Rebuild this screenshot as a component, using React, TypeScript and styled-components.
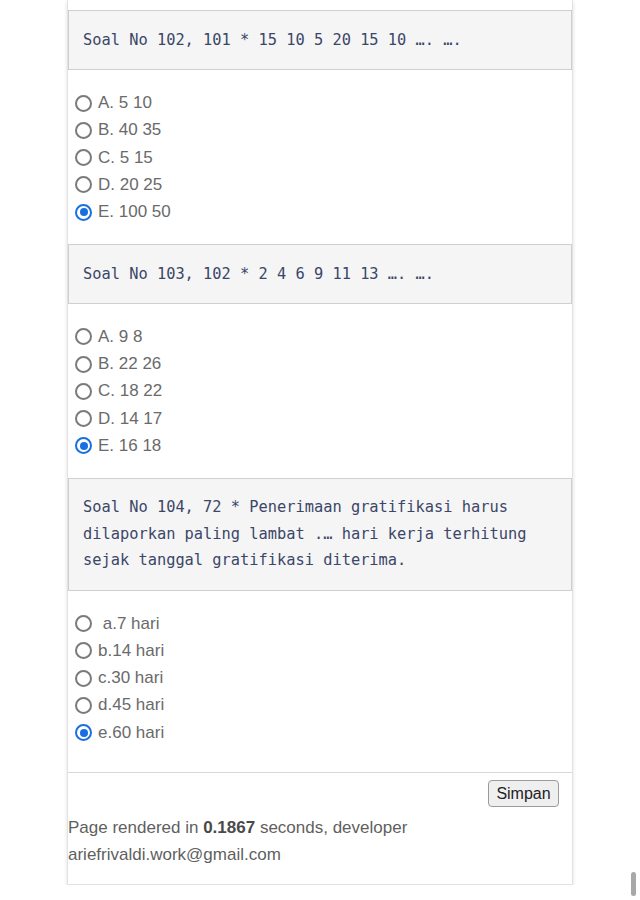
import React from "react";
import styled, { createGlobalStyle } from "styled-components";

const Global = createGlobalStyle`
  html, body { margin: 0; padding: 0; background: #ffffff; }
  body { font-family: "Liberation Sans", Arial, sans-serif; overflow: hidden; }
`;

const Card = styled.div`
  box-sizing: border-box;
  width: 506px;
  margin: 0 auto;
  padding-top: 10px;
  background: #fff;
  border: 1px solid #e2e2e2;
  border-top: 0;
  box-shadow: 0 2px 4px rgba(0, 0, 0, 0.12);
  padding-bottom: 16px;
`;

const Question = styled.pre`
  margin: 0;
  padding: 15.75px 14px;
  background: #f5f5f5;
  border: 1px solid #cfcfcf;
  font-family: "DejaVu Sans Mono", "Liberation Mono", monospace;
  font-size: 15.35px;
  line-height: 26.5px;
  color: #3b4668;
  white-space: pre-wrap;
  word-break: normal;
`;

const OptionList = styled.div`
  display: flex;
  flex-direction: column;
  padding: 19.5px 0 18px 7px;
`;

const Option = styled.label`
  display: flex;
  align-items: center;
  height: 27.25px;
  font-size: 17px;
  color: #6a6a6a;
  cursor: pointer;
`;

const Radio = styled.span<{ $checked?: boolean }>`
  box-sizing: border-box;
  width: 17px;
  height: 17px;
  border-radius: 50%;
  border: 2px solid ${(p) => (p.$checked ? "#1a6fe0" : "#7a7a7a")};
  margin-right: 6px;
  display: flex;
  align-items: center;
  justify-content: center;
  flex-shrink: 0;
  &::after {
    content: "";
    display: ${(p) => (p.$checked ? "block" : "none")};
    width: 8px;
    height: 8px;
    border-radius: 50%;
    background: #1a6fe0;
  }
`;

const Footer = styled.div`
  margin-top: 8px;
  border-top: 1px solid #d8d8d8;
  display: flex;
  flex-direction: column;
`;

const ButtonRow = styled.div`
  display: flex;
  justify-content: flex-end;
  padding: 7px 13px 0 0;
`;

const SaveButton = styled.button`
  box-sizing: border-box;
  height: 27px;
  width: 71px;
  padding: 0;
  font-family: "Liberation Sans", Arial, sans-serif;
  font-size: 16px;
  color: #222;
  background: #efefef;
  border: 1px solid #9a9a9a;
  border-radius: 4px;
`;

const Rendered = styled.p`
  margin: 7px 0 0 0;
  font-size: 17px;
  line-height: 27px;
  color: #5f5f5f;
  b { color: #4a4a4a; }
`;

const ScrollThumb = styled.div`
  position: fixed;
  right: 4px;
  bottom: 4px;
  width: 5px;
  height: 24px;
  border-radius: 3px;
  background: #a8a8a8;
`;

type Q = { text: string; options: string[]; answer: number };

const questions: Q[] = [
  {
    text: "Soal No 102, 101 * 15 10 5 20 15 10 …. ….",
    options: ["A. 5 10", "B. 40 35", "C. 5 15", "D. 20 25", "E. 100 50"],
    answer: 4,
  },
  {
    text: "Soal No 103, 102 * 2 4 6 9 11 13 …. ….",
    options: ["A. 9 8", "B. 22 26", "C. 18 22", "D. 14 17", "E. 16 18"],
    answer: 4,
  },
  {
    text: "Soal No 104, 72 * Penerimaan gratifikasi harus dilaporkan paling lambat .… hari kerja terhitung sejak tanggal gratifikasi diterima.",
    options: ["\u00a0a.7 hari", "b.14 hari", "c.30 hari", "d.45 hari", "e.60 hari"],
    answer: 4,
  },
];

export default function App() {
  return (
    <>
      <Global />
      <Card>
        {questions.map((q, qi) => (
          <div key={qi}>
            <Question>{q.text}</Question>
            <OptionList>
              {q.options.map((o, oi) => (
                <Option key={oi}>
                  <Radio $checked={oi === q.answer} />
                  {o}
                </Option>
              ))}
            </OptionList>
          </div>
        ))}
        <Footer>
          <ButtonRow>
            <SaveButton>Simpan</SaveButton>
          </ButtonRow>
          <Rendered>
            Page rendered in <b>0.1867</b> seconds, developer
            <br />
            ariefrivaldi.work@gmail.com
          </Rendered>
        </Footer>
      </Card>
      <ScrollThumb />
    </>
  );
}
